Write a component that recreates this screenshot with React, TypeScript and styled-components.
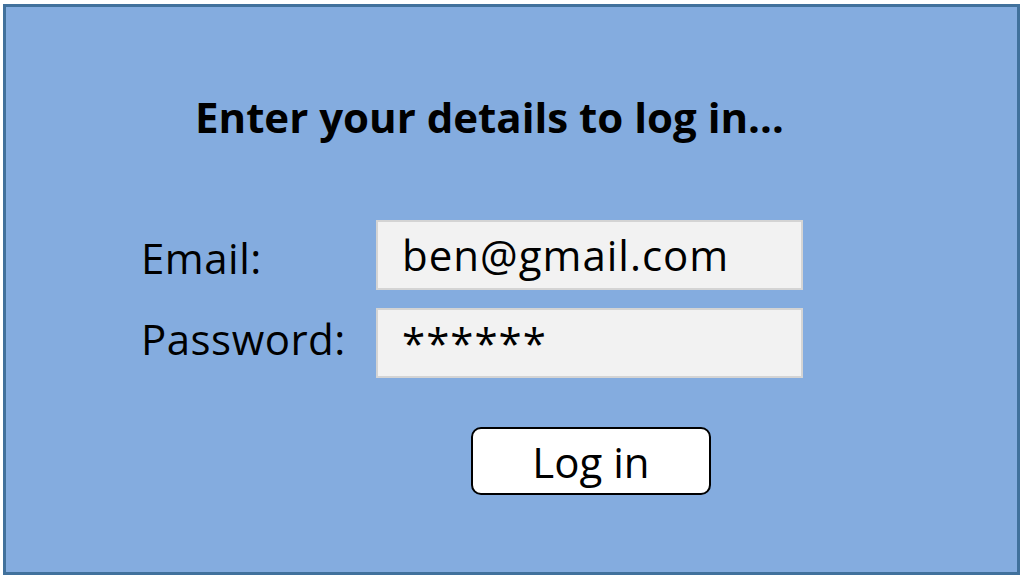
import React from 'react'
import styled, { createGlobalStyle } from 'styled-components'

const GlobalStyle = createGlobalStyle`
  html, body {
    margin: 0;
    padding: 0;
    background: #ffffff;
  }
  body {
    font-family: "Open Sans", Lato, "Liberation Sans", sans-serif;
    color: #000000;
  }
`

const Frame = styled.div`
  box-sizing: border-box;
  width: 1017px;
  height: 571px;
  margin: 4px 0 0 3px;
  border: 3px solid #41719c;
  background: #84acdf;
  padding: 89px 0 0 135px;
  display: flex;
  flex-direction: column;
`

const Title = styled.h1`
  margin: 0 0 0 54px;
  font-size: 42px;
  line-height: 42px;
  font-weight: 700;
`

const Form = styled.form`
  margin-top: 82px;
  display: grid;
  grid-template-columns: 235px 427px;
  grid-auto-rows: 70px;
  row-gap: 18px;
`

const Label = styled.label<{ $offset: number }>`
  font-size: 42px;
  line-height: 42px;
  letter-spacing: 0.5px;
  padding-top: ${(p) => p.$offset}px;
`

const Field = styled.div`
  box-sizing: border-box;
  height: 70px;
  border: 2px solid #d4d4d4;
  background: #f2f2f2;
  padding: 12px 0 0 24px;
  font-size: 42px;
  line-height: 42px;
  letter-spacing: 1px;
`

const Actions = styled.div`
  display: flex;
  padding: 49px 0 0 330px;
`

const Button = styled.button`
  box-sizing: border-box;
  width: 240px;
  height: 68px;
  border: 2px solid #000000;
  border-radius: 10px;
  background: #ffffff;
  font-family: inherit;
  font-size: 42px;
  color: #000000;
  padding: 0;
`

const App = () => {
  return <>
    <GlobalStyle />
    <Frame>
      <Title>Enter your details to log in…</Title>
      <Form>
        <Label $offset={17}>Email:</Label>
        <Field>ben@gmail.com</Field>
        <Label $offset={10}>Password:</Label>
        <Field>******</Field>
      </Form>
      <Actions>
        <Button type="button">Log in</Button>
      </Actions>
    </Frame>
  </>
}

export default App
